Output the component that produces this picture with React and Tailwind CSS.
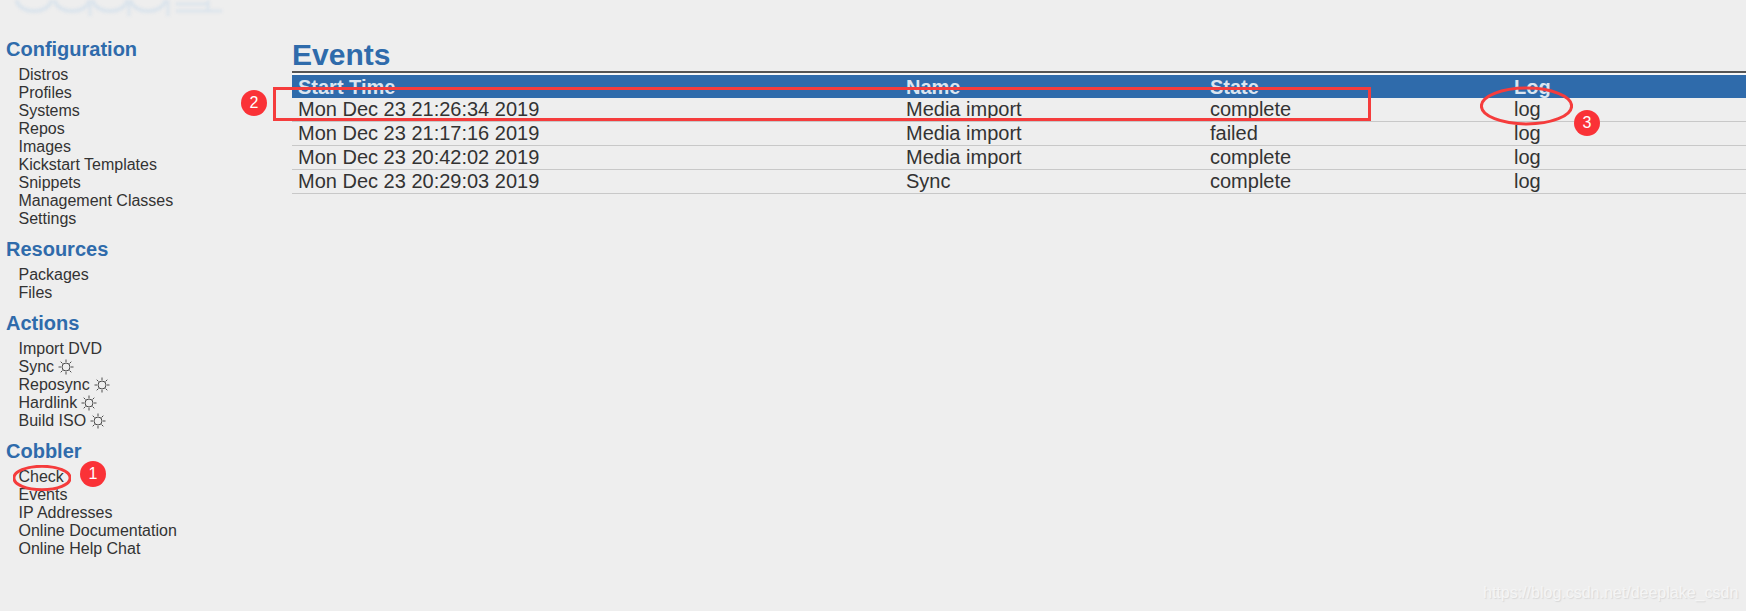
import React from "react";

const sections = [
  {
    title: "Configuration",
    items: ["Distros", "Profiles", "Systems", "Repos", "Images", "Kickstart Templates", "Snippets", "Management Classes", "Settings"],
  },
  { title: "Resources", items: ["Packages", "Files"] },
  {
    title: "Actions",
    items: [
      { label: "Import DVD" },
      { label: "Sync", sun: true },
      { label: "Reposync", sun: true },
      { label: "Hardlink", sun: true },
      { label: "Build ISO", sun: true },
    ],
  },
  { title: "Cobbler", items: ["Check", "Events", "IP Addresses", "Online Documentation", "Online Help Chat"] },
];

const events = [
  ["Mon Dec 23 21:26:34 2019", "Media import", "complete"],
  ["Mon Dec 23 21:17:16 2019", "Media import", "failed"],
  ["Mon Dec 23 20:42:02 2019", "Media import", "complete"],
  ["Mon Dec 23 20:29:03 2019", "Sync", "complete"],
];

const Sun = () => (
  <svg width="16" height="16" viewBox="0 0 16 16" className="inline-block ml-[4px] align-[-3px]" fill="none" stroke="#4a4a4a" strokeWidth="1">
    <circle cx="8" cy="8" r="4" />
    <path d="M8 0.5v2.5M8 13v2.5M0.5 8h2.5M13 8h2.5M2.7 2.7l1.8 1.8M11.5 11.5l1.8 1.8M2.7 13.3l1.8-1.8M11.5 4.5l1.8-1.8" />
  </svg>
);

const Badge = ({ n, className }) => (
  <div className={`absolute w-[26px] h-[26px] rounded-full bg-[#fa3237] text-white text-[16px] leading-[26px] text-center ${className}`}>{n}</div>
);

const Ring = ({ className }) => (
  <svg className={`absolute ${className}`} viewBox="0 0 100 40" preserveAspectRatio="none" fill="none">
    <ellipse cx="50" cy="20" rx="48.5" ry="18" stroke="#f53c3c" strokeWidth="3" vectorEffect="non-scaling-stroke" />
  </svg>
);

const Logo = () => (
  <svg className="absolute left-0 top-0 blur-[1.5px]" width="240" height="20" viewBox="0 0 240 20" fill="none" stroke="#dbe4ec" strokeWidth="4">
    <ellipse cx="34" cy="0" rx="17" ry="11" />
    <ellipse cx="72" cy="0" rx="17" ry="11" />
    <ellipse cx="110" cy="0" rx="17" ry="11" />
    <ellipse cx="148" cy="0" rx="17" ry="11" />
    <path d="M90 0v16M129 0v16M168 0v16" strokeWidth="3" />
    <path d="M176 4h32M176 11h46M208 0v11" strokeWidth="3" />
  </svg>
);

const App = () => {
  return (
    <div className="relative h-[611px] w-[1746px] overflow-hidden bg-[#eeeeee] text-[#333333] font-['Liberation_Sans',Arial,sans-serif]">
      <Logo />
      <div className="flex">
        <div className="w-[292px] shrink-0 pt-[37px] pl-[6px]">
          {sections.map((section) => (
            <div key={section.title} className="mb-[9px]">
              <h3 className="text-[20px] leading-[24px] font-bold text-[#2f6bab]">{section.title}</h3>
              <ul className="mt-[5px] pl-[12.5px] text-[16px] leading-[18px]">
                {section.items.map((item) => {
                  const label = item.label || item;
                  return (
                    <li key={label} className="h-[18px]">
                      {label}
                      {item.sun && <Sun />}
                    </li>
                  );
                })}
              </ul>
            </div>
          ))}
        </div>
        <div className="flex-1 min-w-0">
          <h1 className="mt-[38px] text-[30px] leading-[33px] font-bold text-[#2f6bab]">Events</h1>
          <div className="border-t-2 border-[#555555] pt-[2px] bg-[#f7f7f7]">
            <table className="w-full table-fixed border-collapse text-[20px] text-left bg-[#eeeeee]">
              <thead>
                <tr className="h-[23px] bg-[#2f6bab] text-[#dbe5f0]">
                  <th className="w-[608px] p-0 pl-[6px] pt-[1px] leading-[21px]">Start Time</th>
                  <th className="w-[304px] p-0 pl-[6px] pt-[1px] leading-[21px]">Name</th>
                  <th className="w-[304px] p-0 pl-[6px] pt-[1px] leading-[21px]">State</th>
                  <th className="p-0 pl-[6px] pt-[1px] leading-[21px]">Log</th>
                </tr>
              </thead>
              <tbody>
                {events.map((row) => (
                  <tr key={row[0]} className="h-[24px] first:h-[23px] border-b border-[#c8c8c8]">
                    {row.map((cell) => (
                      <td key={cell} className="p-0 pl-[6px] leading-[22px]">{cell}</td>
                    ))}
                    <td className="p-0 pl-[6px] leading-[22px]">log</td>
                  </tr>
                ))}
              </tbody>
            </table>
          </div>
        </div>
      </div>

      {/* annotations drawn over the page */}
      <div className="absolute left-[273px] top-[87px] w-[1098px] h-[34px] border-[3px] border-[#f53c3c]" />
      <Ring className="left-[1480px] top-[86px] w-[93px] h-[40px]" />
      <Ring className="left-[13px] top-[465px] w-[58px] h-[26px]" />
      <Badge n="1" className="left-[80px] top-[461px]" />
      <Badge n="2" className="left-[241px] top-[90px]" />
      <Badge n="3" className="left-[1574px] top-[110px]" />

      <div className="absolute left-[1483px] top-[583px] text-[16px] leading-[20px] text-[#f5f5f5] [text-shadow:1px_1px_1px_#d8d8d8]">
        https://blog.csdn.net/deeplake_csdn
      </div>
    </div>
  );
};

export default App;
